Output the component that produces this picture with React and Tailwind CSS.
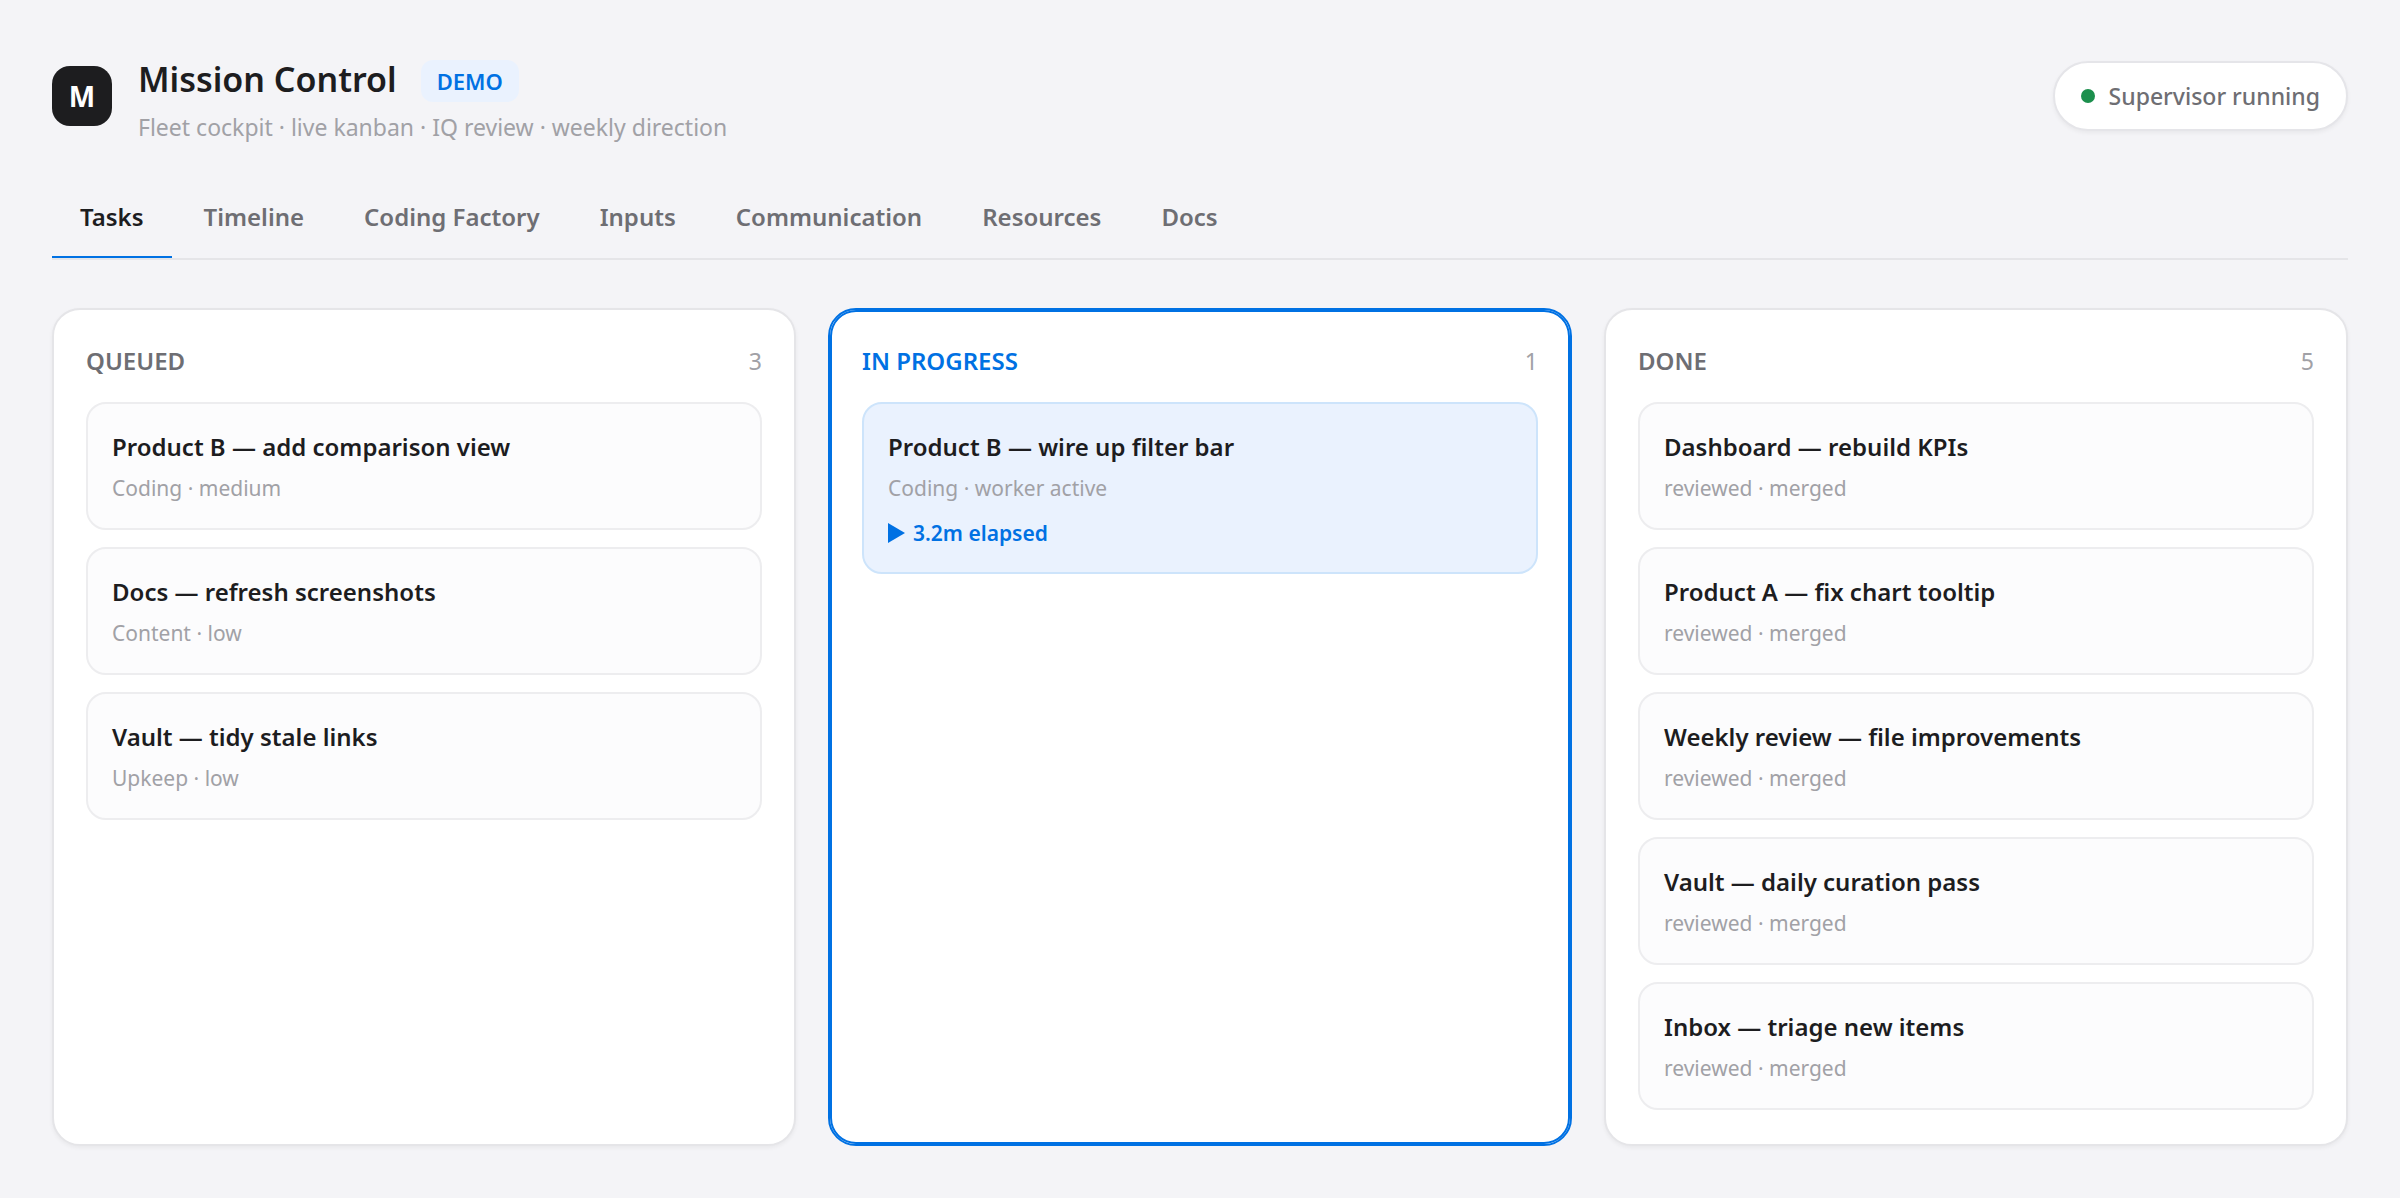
import React, { useState } from "react";

const TABS = ["Tasks", "Timeline", "Coding Factory", "Inputs", "Communication", "Resources", "Docs"];

const COLUMNS = [
  {
    name: "Queued",
    count: 3,
    cards: [
      { title: "Product B — add comparison view", meta: "Coding · medium" },
      { title: "Docs — refresh screenshots", meta: "Content · low" },
      { title: "Vault — tidy stale links", meta: "Upkeep · low" },
    ],
  },
  {
    name: "In progress",
    count: 1,
    active: true,
    cards: [
      { title: "Product B — wire up filter bar", meta: "Coding · worker active", elapsed: "3.2m elapsed" },
    ],
  },
  {
    name: "Done",
    count: 5,
    cards: [
      { title: "Dashboard — rebuild KPIs", meta: "reviewed · merged" },
      { title: "Product A — fix chart tooltip", meta: "reviewed · merged" },
      { title: "Weekly review — file improvements", meta: "reviewed · merged" },
      { title: "Vault — daily curation pass", meta: "reviewed · merged" },
      { title: "Inbox — triage new items", meta: "reviewed · merged" },
    ],
  },
];

function Header() {
  return (
    <header className="flex items-center justify-between gap-6">
      <div className="flex items-center gap-[26px]">
        <div className="flex size-15 shrink-0 items-center justify-center rounded-[18px] bg-[#1d1d1f] text-[28px] font-bold text-white">
          M
        </div>
        <div className="pt-3">
          <div className="flex items-start gap-6">
            <h1 className="text-[34px] leading-[38px] font-semibold">Mission Control</h1>
            <span className="rounded-xl bg-[#eaf2fe] px-4 text-[22px] leading-[42px] font-semibold text-[#0071e3]">
              DEMO
            </span>
          </div>
          <p className="mt-2 text-[23px] leading-[34px] text-[#a1a1a6]">
            Fleet cockpit · live kanban · IQ review · weekly direction
          </p>
        </div>
      </div>
      <div className="flex shrink-0 items-center gap-[14px] rounded-full border-2 border-[#e5e5e9] bg-white px-[26px] py-[13px] shadow-[0_2px_4px_rgba(0,0,0,0.05)]">
        <span className="size-[14px] rounded-full bg-[#1c8f4d]" />
        <span className="text-[23px] leading-10 font-medium text-[#6e6e73]">Supervisor running</span>
      </div>
    </header>
  );
}

function Tabs({ current, onSelect }) {
  return (
    <nav className="mt-[34px] flex gap-1 border-b-2 border-[#e5e5e8]">
      {TABS.map((tab) => (
        <button
          key={tab}
          type="button"
          onClick={() => onSelect(tab)}
          className={
            "border-b-2 px-7 py-5 text-[24px] leading-[38px] font-semibold " +
            (tab === current ? "border-[#0071e3] text-[#1d1d1f]" : "border-transparent text-[#6e6e73]")
          }
        >
          {tab}
        </button>
      ))}
    </nav>
  );
}

function Card({ card, active }) {
  return (
    <li
      className={
        "rounded-[20px] border-2 p-6 " +
        (active ? "border-[#cde4fb] bg-[#eaf2fe]" : "border-[#ededef] bg-[#fcfcfd]")
      }
    >
      <h3 className="text-[24px] leading-[38px] font-semibold">{card.title}</h3>
      <p className="mt-[6px] text-[21px] leading-8 text-[#a1a1a6]">{card.meta}</p>
      {card.elapsed && (
        <p className="mt-[14px] flex items-center gap-2 text-[21px] leading-[30px] font-semibold text-[#0071e3]">
          <svg viewBox="0 0 17 20" className="h-5 w-[17px]" fill="currentColor" aria-hidden="true">
            <path d="M0 0 17 10 0 20Z" />
          </svg>
          {card.elapsed}
        </p>
      )}
    </li>
  );
}

function Column({ column }) {
  return (
    <section
      className={
        "rounded-[28px] border-2 bg-white p-8 " +
        (column.active
          ? "border-[#0071e3] shadow-[inset_0_0_0_2px_#0071e3]"
          : "border-[#e5e5e8] shadow-[0_2px_4px_rgba(0,0,0,0.05)]")
      }
    >
      <div className="mb-[22px] flex items-center justify-between leading-[38px]">
        <h2
          className={
            "text-[24px] font-semibold uppercase " + (column.active ? "text-[#0071e3]" : "text-[#6e6e73]")
          }
        >
          {column.name}
        </h2>
        <span className="text-[23px] text-[#a1a1a6]">{column.count}</span>
      </div>
      <ul className="flex flex-col gap-[17px]">
        {column.cards.map((card) => (
          <Card key={card.title} card={card} active={column.active} />
        ))}
      </ul>
    </section>
  );
}

export default function App() {
  const [tab, setTab] = useState("Tasks");
  return (
    <div className="flex min-h-screen flex-col bg-[#f4f4f7] px-13 pt-12 pb-13 font-['Noto_Sans',sans-serif] text-[#1d1d1f]">
      <Header />
      <Tabs current={tab} onSelect={setTab} />
      <main className="mt-12 grid flex-1 grid-cols-3 gap-8">
        {COLUMNS.map((column) => (
          <Column key={column.name} column={column} />
        ))}
      </main>
    </div>
  );
}
